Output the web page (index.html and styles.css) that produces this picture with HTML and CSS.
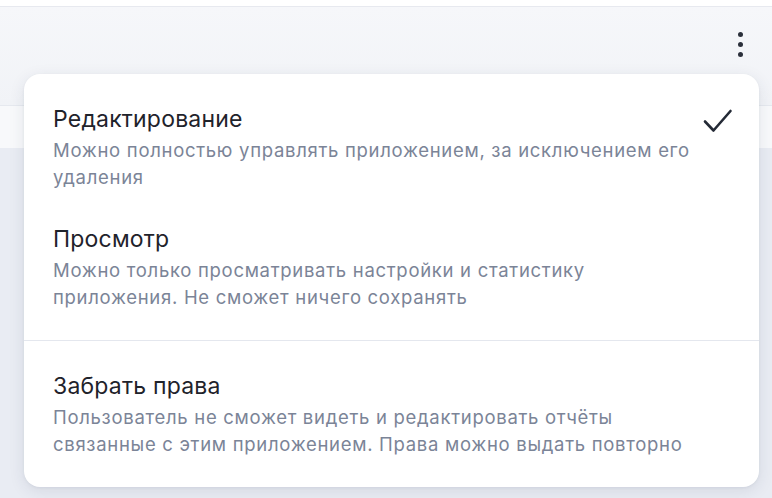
FILE: index.html
```html
<!DOCTYPE html>
<html lang="ru">
<head>
<meta charset="utf-8">
<link rel="stylesheet" href="styles.css">
</head>
<body>
<div class="page">
  <div class="topbar"></div>
  <div class="header">
    <button class="kebab" aria-label="Ещё">
      <span class="dot"></span><span class="dot"></span><span class="dot"></span>
    </button>
  </div>
  <div class="subbar"></div>
  <div class="content"></div>

  <div class="menu">
    <div class="group">
      <div class="item selected">
        <div class="text">
          <div class="title">Редактирование</div>
          <div class="desc">Можно полностью управлять приложением, за исключением его удаления</div>
        </div>
        <svg class="check" width="30" height="26" viewBox="0 0 30 26"><path d="M2 13.5 L10.5 22.5 L27.5 3" fill="none" stroke="#242a36" stroke-width="2.6" stroke-linecap="round" stroke-linejoin="round"/></svg>
      </div>
      <div class="item">
        <div class="text">
          <div class="title">Просмотр</div>
          <div class="desc">Можно только просматривать настройки и статистику приложения. Не сможет ничего сохранять</div>
        </div>
      </div>
    </div>
    <div class="group">
      <div class="item">
        <div class="text">
          <div class="title">Забрать права</div>
          <div class="desc">Пользователь не сможет видеть и редактировать отчёты связанные с этим приложением. Права можно выдать повторно</div>
        </div>
      </div>
    </div>
  </div>
</div>
</body>
</html>
```

FILE: styles.css
```css
html, body {
  margin: 0;
  padding: 0;
}
body {
  width: 772px;
  height: 498px;
  overflow: hidden;
  background: #e9ecf3;
  font-family: Inter, "Noto Sans", "DejaVu Sans", sans-serif;
}
.page {
  position: relative;
  width: 772px;
  height: 498px;
  display: flex;
  flex-direction: column;
}
.topbar {
  height: 6px;
  background: #ffffff;
  border-bottom: 1px solid #e7e9ef;
}
.header {
  height: 98px;
  background: linear-gradient(180deg, #f6f7fa 0%, #f1f3f7 100%);
  border-bottom: 1px solid #e6e9ef;
  display: flex;
  justify-content: flex-end;
  align-items: flex-start;
  padding-right: 22px;
}
.kebab {
  margin-top: 20px;
  width: 20px;
  height: 34px;
  border: 0;
  padding: 0;
  background: none;
  display: flex;
  flex-direction: column;
  align-items: center;
  justify-content: center;
  gap: 5px;
}
.dot {
  width: 5px;
  height: 5px;
  border-radius: 50%;
  background: #2b303b;
}
.subbar {
  height: 42px;
  background: #f8f9fb;
}
.content {
  flex: 1;
  background: #e9ecf3;
}
.menu {
  position: absolute;
  left: 24px;
  top: 74px;
  width: 735px;
  height: 413px;
  box-sizing: border-box;
  background: #ffffff;
  border-radius: 16px;
  box-shadow: 0 4px 16px rgba(40, 50, 80, 0.10), 0 1px 3px rgba(40, 50, 80, 0.06);
  display: flex;
  flex-direction: column;
}
.group {
  padding: 14px 0 12px;
}
.group + .group {
  border-top: 1px solid #e4e7ee;
  padding-top: 14px;
}
.item {
  display: flex;
  align-items: flex-start;
  justify-content: space-between;
  padding: 17px 26px 17px 29px;
}
.text {
  max-width: 643px;
}
.title {
  font-size: 23px;
  line-height: 28px;
  letter-spacing: 0.2px;
  color: #1f232b;
}
.desc {
  margin-top: 4px;
  font-size: 18.5px;
  line-height: 27px;
  letter-spacing: 0.7px;
  color: #7b8497;
}
.check {
  margin-top: 3px;
}
```
